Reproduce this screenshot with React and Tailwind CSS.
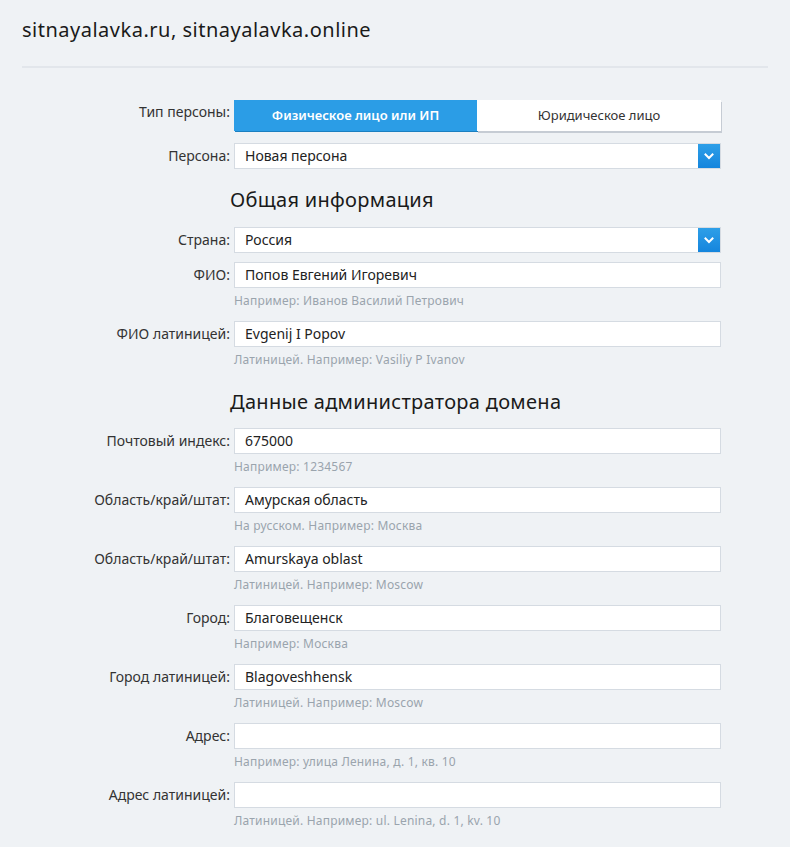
import React from "react";

const font = { fontFamily: '"Noto Sans", "Open Sans", sans-serif' };

function Chevron() {
  return (
    <svg width="10" height="7" viewBox="0 0 10 7" fill="none">
      <path d="M1.5 1.5 L5 5 L8.5 1.5" stroke="white" strokeWidth="2" strokeLinecap="square" />
    </svg>
  );
}

function Label({ children }) {
  return (
    <div className="w-[234px] shrink-0 pr-[4px] text-right text-[14px] leading-[26px] text-[#333]">
      {children}
    </div>
  );
}

function Field({ label, value, hint }) {
  return (
    <div className="flex mb-[12px]">
      <Label>{label}</Label>
      <div className="w-[487px]">
        <div className="h-[26px] bg-white border border-[#d5dbe2] px-[10px] text-[14px] leading-[24px] text-[#222]">
          {value}
        </div>
        <div className="mt-[5px] text-[12px] tracking-[0.2px] leading-[16px] text-[#9aa4ad]">{hint}</div>
      </div>
    </div>
  );
}

function Select({ label, value, className }) {
  return (
    <div className={"flex " + className}>
      <Label>{label}</Label>
      <div className="w-[487px] h-[26px] bg-white border border-[#d5dbe2] flex items-stretch">
        <div className="flex-1 px-[10px] text-[14px] leading-[24px] text-[#222]">{value}</div>
        <div className="w-[22px] flex items-center justify-center bg-gradient-to-b from-[#2d9fe8] to-[#1485dd]">
          <Chevron />
        </div>
      </div>
    </div>
  );
}

function Heading({ children, className }) {
  return (
    <div className={"pl-[230px] text-[20px] tracking-[0.3px] leading-[24px] text-[#1a1a1a] " + className}>{children}</div>
  );
}

export default function App() {
  return (
    <div className="min-h-[847px] bg-[#eff2f5]" style={font}>
      <div className="px-[22px]">
        <div className="pt-[18px] pb-[24px] text-[20px] tracking-[0.5px] leading-[24px] text-[#1a1a1a]">
          sitnayalavka.ru, sitnayalavka.online
        </div>
        <div className="h-[2px] bg-[#e2e6eb]" />
      </div>

      <div className="pt-[32px]">
        <div className="flex mb-[12px]">
          <div className="w-[234px] shrink-0 pr-[4px] text-right text-[14px] leading-[24px] text-[#333]">
            Тип персоны:
          </div>
          <div className="flex w-[487px] h-[31px]">
            <div className="w-[243px] bg-[#2b9de6] flex items-center justify-center text-white text-[13px] font-semibold shadow-[1px_1px_0_#1b7fc0]">
              Физическое лицо или ИП
            </div>
            <div className="flex-1 bg-white flex items-center justify-center text-[#333] text-[13px] shadow-[1px_2px_0_#c6ccd4]">
              Юридическое лицо
            </div>
          </div>
        </div>

        <Select label="Персона:" value="Новая персона" className="" />

        <Heading className="mt-[19px] mb-[15px]">Общая информация</Heading>

        <Select label="Страна:" value="Россия" className="mb-[9px]" />
        <Field label="ФИО:" value="Попов Евгений Игоревич" hint="Например: Иванов Василий Петрович" />
        <Field label="ФИО латиницей:" value="Evgenij I Popov" hint="Латиницей. Например: Vasiliy P Ivanov" />

        <Heading className="mt-[22px] mb-[14px]">Данные администратора домена</Heading>

        <Field label="Почтовый индекс:" value="675000" hint="Например: 1234567" />
        <Field label="Область/край/штат:" value="Амурская область" hint="На русском. Например: Москва" />
        <Field label="Область/край/штат:" value="Amurskaya oblast" hint="Латиницей. Например: Moscow" />
        <Field label="Город:" value="Благовещенск" hint="Например: Москва" />
        <Field label="Город латиницей:" value="Blagoveshhensk" hint="Латиницей. Например: Moscow" />
        <Field label="Адрес:" value="" hint="Например: улица Ленина, д. 1, кв. 10" />
        <Field label="Адрес латиницей:" value="" hint="Латиницей. Например: ul. Lenina, d. 1, kv. 10" />
      </div>
    </div>
  );
}
